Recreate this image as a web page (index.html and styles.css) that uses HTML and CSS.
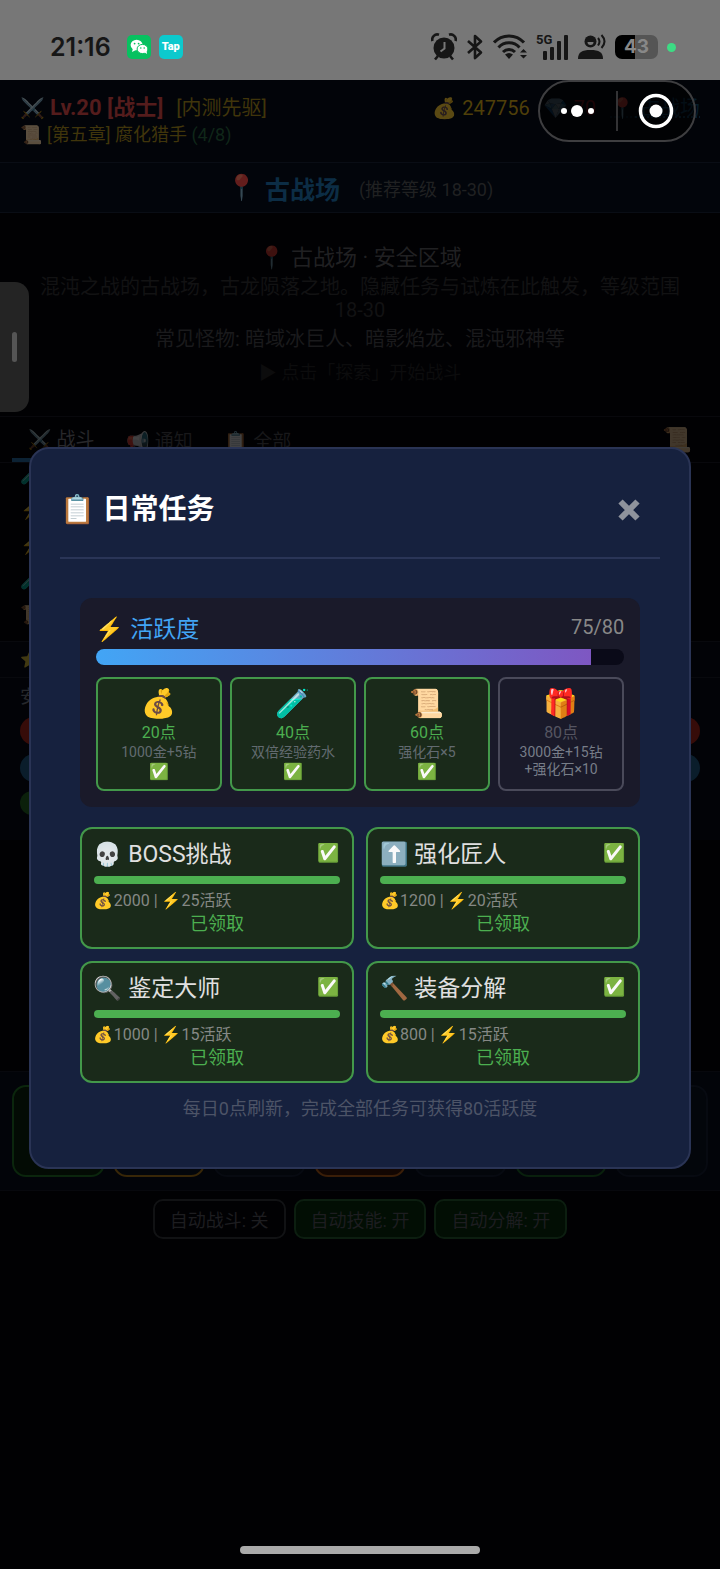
FILE: index.html
```
<!DOCTYPE html>
<html lang="zh-CN">
<head>
  <meta charset="UTF-8">
  <meta name="viewport" content="width=device-width, initial-scale=1.0">
  <title>日常任务</title>
  <link rel="stylesheet" href="styles.css">
</head>
<body>
  <div class="status-bar">
    <div class="status-left">
      <span class="clock">21:16</span>
      <svg class="app-icon" viewBox="0 0 24 24">
        <rect width="24" height="24" rx="5" fill="#07c160"/>
        <ellipse cx="9.600" cy="10" rx="6" ry="5.200" fill="#fff"/>
        <path d="M6 13l-1 4 4-2z" fill="#fff"/>
        <ellipse cx="15.500" cy="14" rx="5.400" ry="4.600" fill="#fff" stroke="#07c160"/>
        <path d="M17 17l3 2-.5-4z" fill="#fff"/>
        <g fill="#07c160"><circle cx="7.600" cy="8.600" r=".9"/><circle cx="11.600" cy="8.600" r=".9"/><circle cx="13.800" cy="13" r=".8"/><circle cx="17.200" cy="13" r=".8"/></g>
      </svg>
      <span class="tap-icon">Tap</span>
    </div>
    <div class="status-right">
      <svg width="26" height="28" viewBox="0 0 26 28" fill="#161616">
        <circle cx="13" cy="15" r="10.500"/>
        <path d="M1.500 8A5 5 0 0 1 8 1.800M18 1.800A5 5 0 0 1 24.500 8M7 23l-3 3.500M19 23l3 3.500" fill="none" stroke="#161616" stroke-width="2.600"/>
        <path d="M13.500 9v6.500l-4 3" fill="none" stroke="#777" stroke-width="2"/>
      </svg>
      <svg width="18" height="26" viewBox="0 0 18 26" fill="none" stroke="#161616" stroke-width="2.600" stroke-linejoin="round">
        <path d="M2 7l13 11.500L9 24V2l6 5.500L2 19"/>
      </svg>
      <svg width="34" height="26" viewBox="0 0 34 26" fill="none" stroke="#161616" stroke-width="3">
        <path d="M1 8.500C9-.3 23-.3 31 8.500M5.500 13.500C11 7.300 21 7.300 26.500 13.500M10 18c3.500-3.500 8.500-3.500 12 0"/>
        <path d="M12 20.500q4-3 8 0L16 25zM27 18.500h7L30.500 15zM27 21h7l-3.500 3.500z" fill="#161616" stroke="none"/>
      </svg>
      <span class="signal">
        <span class="net">5G</span>
        <svg width="26" height="25" viewBox="0 0 26 25" fill="#161616">
          <rect x="0" y="16" width="4" height="9" rx="1"/><rect x="7" y="12" width="4" height="13" rx="1"/><rect x="14" y="6" width="4" height="19" rx="1"/><rect x="21" y="0" width="4" height="25" rx="1"/>
        </svg>
      </span>
      <svg width="28" height="26" viewBox="0 0 28 26" fill="#161616">
        <path d="M0 25c0-7 4-9 12.500-9S25 18 25 25z"/>
        <circle cx="12.500" cy="7.500" r="6"/>
        <path d="M9.500 8h6a3 3 0 0 1-6 0z" fill="#777"/>
        <path d="M20 4q3 3.500 0 7.500M23.500 1q6 6.500 0 13" fill="none" stroke="#161616" stroke-width="2"/>
      </svg>
      <span class="battery">43</span>
      <span class="live-dot"></span>
    </div>
  </div>

  <div class="game">
    <header class="player">
      <div class="player-row">
        <div class="player-name"><span class="emoji">⚔️</span> <b>Lv.20 [战士]</b> <span class="badge">[内测先驱]</span></div>
        <div class="wallet">
          <span class="gold"><span class="emoji">💰</span> 247756</span>
          <span class="gem"><span class="emoji">💎</span> 70</span>
          <a class="place" href="#map"><span class="emoji">📍</span> 古战场</a>
        </div>
      </div>
      <div class="quest"><span class="emoji">📜</span> [第五章] 腐化猎手 <span class="count">(4/8)</span></div>
    </header>

    <div class="location">
      <span class="emoji">📍</span>
      <strong>古战场</strong>
      <span>(推荐等级 18-30)</span>
    </div>

    <section class="zone">
      <div class="zone-name"><span class="emoji">📍</span> 古战场 · 安全区域</div>
      <p class="zone-desc">混沌之战的古战场，古龙陨落之地。隐藏任务与试炼在此触发，等级范围 18-30</p>
      <p class="zone-monsters">常见怪物: 暗域冰巨人、暗影焰龙、混沌邪神等</p>
      <p class="zone-hint">▶ 点击「探索」开始战斗</p>
    </section>

    <nav class="tabs">
      <button class="tab active"><span class="emoji">⚔️</span> 战斗</button>
      <button class="tab"><span class="emoji">📢</span> 通知</button>
      <button class="tab"><span class="emoji">📋</span> 全部</button>
      <button class="tab log-btn" aria-label="日志"><span class="emoji">📜</span></button>
    </nav>

    <div class="log">
      <span class="emoji">🧪</span>
      <span class="emoji">⚡</span>
      <span class="emoji">⚡</span>
      <span class="emoji">🧪</span>
      <span class="emoji">📜</span>
    </div>
    <div class="buffs"><span class="emoji">⭐</span></div>
    <div class="stats">
      <div class="safe">安</div>
      <div class="bar hp"></div>
      <div class="bar mp"></div>
      <div class="bar exp"></div>
    </div>

    <div class="actions">
      <button class="action green" aria-label="探索"></button>
      <button class="action gold" aria-label="背包"></button>
      <button class="action" aria-label="技能"></button>
      <button class="action orange" aria-label="强化"></button>
      <button class="action" aria-label="地图"></button>
      <button class="action green-line" aria-label="任务"></button>
      <button class="action" aria-label="更多"></button>
    </div>

    <div class="toggles">
      <button class="toggle">自动战斗: 关</button>
      <button class="toggle on">自动技能: 开</button>
      <button class="toggle on">自动分解: 开</button>
    </div>
  </div>

  <div class="capsule">
    <button class="capsule-btn" aria-label="菜单">
      <svg width="36" height="16" viewBox="0 0 36 16" fill="#fff"><circle cx="4" cy="8" r="3"/><circle cx="17" cy="8" r="6"/><circle cx="31" cy="8" r="3"/></svg>
    </button>
    <span class="capsule-line"></span>
    <button class="capsule-btn" aria-label="关闭小程序">
      <svg width="36" height="36" viewBox="0 0 36 36"><circle cx="18" cy="18" r="15.500" fill="none" stroke="#fff" stroke-width="3.500"/><circle cx="18" cy="18" r="6.500" fill="#fff"/></svg>
    </button>
  </div>

  <div class="side-handle"><span></span></div>

  <div class="overlay">
    <div class="modal" role="dialog" aria-labelledby="modalTitle">
      <div class="modal-header">
        <h2 id="modalTitle">📋 日常任务</h2>
        <button class="close" aria-label="关闭">
          <svg width="22" height="22" viewBox="0 0 22 22"><path d="M2.500 2.500l17 17M19.500 2.500l-17 17" stroke="#8f939c" stroke-width="6"/></svg>
        </button>
      </div>

      <div class="modal-body">
        <section class="activity">
          <div class="activity-head">
            <span class="activity-title">⚡ 活跃度</span>
            <span class="activity-value">75/80</span>
          </div>
          <div class="activity-bar"><div class="activity-fill" style="width:93.75%"></div></div>
          <div class="rewards">
            <div class="reward done">
              <div class="reward-icon">💰</div>
              <div class="reward-point">20点</div>
              <div class="reward-text">1000金+5钻</div>
              <div class="reward-check">✅</div>
            </div>
            <div class="reward done">
              <div class="reward-icon">🧪</div>
              <div class="reward-point">40点</div>
              <div class="reward-text">双倍经验药水</div>
              <div class="reward-check">✅</div>
            </div>
            <div class="reward done">
              <div class="reward-icon">📜</div>
              <div class="reward-point">60点</div>
              <div class="reward-text">强化石×5</div>
              <div class="reward-check">✅</div>
            </div>
            <div class="reward">
              <div class="reward-icon">🎁</div>
              <div class="reward-point">80点</div>
              <div class="reward-text">3000金+15钻<br>+强化石×10</div>
            </div>
          </div>
        </section>

        <div class="tasks">
          <div class="task">
            <div class="task-head"><span>💀 BOSS挑战</span><span class="task-check">✅</span></div>
            <div class="task-bar"></div>
            <div class="task-meta">💰2000 | ⚡25活跃</div>
            <div class="task-state">已领取</div>
          </div>
          <div class="task">
            <div class="task-head"><span>⬆️ 强化匠人</span><span class="task-check">✅</span></div>
            <div class="task-bar"></div>
            <div class="task-meta">💰1200 | ⚡20活跃</div>
            <div class="task-state">已领取</div>
          </div>
          <div class="task">
            <div class="task-head"><span>🔍 鉴定大师</span><span class="task-check">✅</span></div>
            <div class="task-bar"></div>
            <div class="task-meta">💰1000 | ⚡15活跃</div>
            <div class="task-state">已领取</div>
          </div>
          <div class="task">
            <div class="task-head"><span>🔨 装备分解</span><span class="task-check">✅</span></div>
            <div class="task-bar"></div>
            <div class="task-meta">💰800 | ⚡15活跃</div>
            <div class="task-state">已领取</div>
          </div>
        </div>
        <p class="tip">每日0点刷新，完成全部任务可获得80活跃度</p>
      </div>
    </div>
  </div>

  <div class="home-indicator"></div>
</body>
</html>
```
FILE: styles.css
```
* {
  box-sizing: border-box;
}
body {
  margin: 0;
  min-height: 100vh;
  background: #010103;
  color: #ddd;
  font-family: Roboto, "Noto Sans CJK SC", "Noto Color Emoji", sans-serif;
}
p, h2 {
  margin: 0;
}
button {
  font: inherit;
  color: inherit;
  background: none;
  border: none;
  padding: 0;
}

/* 系统状态栏 */
.status-bar {
  display: flex;
  justify-content: space-between;
  align-items: center;
  height: 80px;
  padding: 14px 44px 0 50px;
  background: #777;
  color: #161616;
}
.status-left, .status-right {
  display: flex;
  align-items: center;
  gap: 8px;
}
.clock {
  font-family: Inter, Roboto, sans-serif;
  font-size: 25px;
  font-weight: 600;
  margin-right: 8px;
}
.app-icon {
  width: 24px;
  height: 24px;
}
.tap-icon {
  width: 24px;
  height: 24px;
  border-radius: 5px;
  background: #0cc9cd;
  color: #fff;
  font-size: 11px;
  font-weight: 900;
  line-height: 24px;
  text-align: center;
}
.status-right {
  gap: 9px;
}
.signal {
  display: flex;
  position: relative;
  padding-left: 7px;
}
.net {
  position: absolute;
  left: 0;
  top: -1px;
  font-size: 13px;
  line-height: 12px;
  font-weight: 700;
}
.battery {
  width: 43px;
  height: 24px;
  border-radius: 7px;
  background: linear-gradient(90deg, #000 46%, #555 46%);
  color: #888;
  font-family: Inter, sans-serif;
  font-size: 19px;
  font-weight: 700;
  line-height: 24px;
  text-align: center;
}
.live-dot {
  width: 9px;
  height: 9px;
  border-radius: 50%;
  background: #3ddc84;
}

/* 弹窗后面的游戏界面 */
.emoji {
  opacity: 0.25;
}
.player {
  height: 82px;
  padding: 14px 20px 0;
  background: #020409;
}
.player .emoji {
  opacity: 0.35;
}
.player-row {
  display: flex;
  justify-content: space-between;
  align-items: center;
  font-size: 20px;
  line-height: 28px;
}
.player-name b {
  font-size: 22px;
  margin-right: 8px;
  color: #541c1c;
}
.badge {
  color: #40350b;
}
.wallet {
  display: flex;
  gap: 14px;
}
.gold {
  color: #4f3f09;
}
.gem {
  color: #35090e;
}
.gem .emoji {
  opacity: 0.2;
}
.place {
  color: #071c2a;
  text-decoration: underline dotted;
}
.quest {
  font-size: 18px;
  line-height: 26px;
  color: #40350b;
}
.count {
  color: #102719;
}
.location {
  display: flex;
  justify-content: center;
  align-items: center;
  gap: 7px;
  height: 51px;
  border: solid #090d15;
  border-width: 1px 0;
  background: #02050b;
  font-size: 18px;
  color: #202122;
}
.location .emoji, .location strong {
  font-size: 25px;
}
.location .emoji {
  opacity: 0.4;
}
.location strong {
  color: #0c2d45;
  margin-right: 12px;
}
.zone {
  padding: 32px 36px;
  height: 203px;
  text-align: center;
  font-size: 20px;
  line-height: 23px;
}
.zone-name {
  font-size: 22px;
  line-height: 26px;
  margin-bottom: 5px;
  color: #202022;
}
.zone-desc {
  color: #121213;
  margin-bottom: 6px;
}
.zone-monsters {
  color: #1a1a1c;
  margin-bottom: 10px;
}
.zone-hint {
  font-size: 18px;
  color: #0c0c0d;
}
.tabs {
  display: flex;
  height: 47px;
  padding: 0 12px;
  border: solid #08080c;
  border-width: 1px 0;
  font-size: 19px;
  color: #18181a;
}
.tab {
  padding: 0 16px;
}
.tab.active {
  border-bottom: 4px solid #0c2234;
  color: #28282b;
}
.log-btn {
  margin-left: auto;
  font-size: 24px;
}
.log {
  display: flex;
  flex-direction: column;
  gap: 11px;
  height: 178px;
  padding-left: 20px;
  font-size: 18px;
  line-height: 24px;
}
.buffs {
  height: 37px;
  padding-left: 20px;
  border: solid #08090d;
  border-width: 1px 0;
  background: #020307;
  line-height: 36px;
}
.stats {
  display: flex;
  flex-direction: column;
  gap: 9px;
  height: 162px;
  padding: 8px 20px;
  background: #020307;
}
.safe {
  font-size: 18px;
  line-height: 22px;
  color: #26282c;
}
.bar {
  height: 28px;
  flex-shrink: 0;
  border-radius: 14px;
}
.hp {
  background: #360c09;
}
.mp {
  background: #0a1d2b;
}
.exp {
  width: 40%;
  height: 24px;
  background: #0b200b;
}
.actions {
  display: flex;
  gap: 8px;
  margin-top: 231px;
  padding: 13px 12px;
  height: 120px;
  border: solid #07080d;
  border-width: 1px 0;
  background: #020409;
}
.action {
  flex: 1;
  border: 2px solid #070a11;
  border-radius: 14px;
  background: #03060b;
}
.action.green {
  border-color: #0b260d;
  background: #030b04;
}
.action.gold {
  border-color: #382708;
}
.action.orange {
  border-color: #3a1e08;
  background: #120602;
}
.action.green-line {
  border-color: #09200d;
}
.toggles {
  display: flex;
  justify-content: center;
  gap: 8px;
  padding: 8px;
}
.toggle {
  height: 40px;
  padding: 0 15px;
  border: 2px solid #111214;
  border-radius: 10px;
  font-size: 18px;
  color: #1d1d20;
}
.toggle.on {
  border-color: #0c1e10;
  background: #020e04;
}

/* 小程序胶囊按钮 */
.capsule {
  position: absolute;
  top: 80px;
  right: 24px;
  display: flex;
  align-items: center;
  width: 158px;
  height: 62px;
  border: 2px solid #3e3e40;
  border-radius: 31px;
  background: rgba(0, 0, 0, 0.5);
}
.capsule-btn {
  display: flex;
  flex: 1;
  justify-content: center;
}
.capsule-line {
  width: 2px;
  height: 40px;
  background: #333335;
}
.side-handle {
  position: absolute;
  top: 282px;
  left: 0;
  display: flex;
  justify-content: center;
  align-items: center;
  width: 29px;
  height: 130px;
  border-radius: 0 14px 14px 0;
  background: #242424;
}
.side-handle span {
  width: 5px;
  height: 30px;
  border-radius: 3px;
  background: #555;
}

/* 日常任务弹窗 */
.overlay {
  position: absolute;
  top: 447px;
  left: 0;
  right: 0;
  display: flex;
  justify-content: center;
}
.modal {
  width: 92%;
  padding: 0 29px 45px;
  border: 2px solid #2a3455;
  border-radius: 20px;
  background: #16213e;
}
.modal-header {
  display: flex;
  justify-content: space-between;
  align-items: center;
  height: 110px;
  padding: 14px 20px 0 1px;
  border-bottom: 2px solid #2a3557;
}
.modal-header h2 {
  font-size: 28px;
  line-height: 36px;
  font-weight: 700;
  color: #fff;
}
.close {
  display: flex;
  cursor: pointer;
}
.modal-body {
  padding: 39px 20px 0;
}
.activity {
  padding: 15px 16px 16px;
  border-radius: 12px;
  background: #1a1a2a;
}
.activity-head {
  display: flex;
  justify-content: space-between;
  align-items: center;
  height: 28px;
  margin-bottom: 8px;
}
.activity-title {
  font-size: 23px;
  color: #42a5f5;
}
.activity-value {
  font-size: 20px;
  color: #888;
}
.activity-bar {
  height: 16px;
  margin-bottom: 12px;
  border-radius: 8px;
  background: #0a0a18;
  overflow: hidden;
}
.activity-fill {
  height: 100%;
  background: linear-gradient(90deg, #42a5f5, #7e57c2);
}
.rewards {
  display: grid;
  grid-template-columns: repeat(4, 1fr);
  gap: 8px;
}
.reward {
  height: 114px;
  padding-top: 8px;
  border: 2px solid #4a4a5a;
  border-radius: 8px;
  text-align: center;
  color: #777d88;
}
.reward.done {
  border-color: #43984a;
  background: #1a2a1a;
  color: #626a70;
}
.reward-icon {
  font-size: 28px;
  line-height: 34px;
}
.reward-point {
  font-size: 16px;
  line-height: 23px;
  color: #555561;
}
.reward.done .reward-point {
  color: #4caf50;
}
.reward-text {
  font-size: 14px;
  line-height: 17px;
}
.reward-check {
  font-size: 16px;
  line-height: 22px;
}
.tasks {
  display: grid;
  grid-template-columns: 1fr 1fr;
  gap: 12px;
  margin: 20px 0 13px;
}
.task {
  height: 122px;
  padding: 9px 12px;
  border: 2px solid #43984a;
  border-radius: 12px;
  background: #1a2a1a;
}
.task-head {
  display: flex;
  justify-content: space-between;
  align-items: center;
  height: 28px;
  font-size: 23px;
  color: #e0e0e0;
}
.task-check {
  font-size: 18px;
}
.task-bar {
  height: 8px;
  margin: 10px 0 5px;
  border-radius: 4px;
  background: #4caf50;
}
.task-meta {
  font-size: 16px;
  line-height: 23px;
  color: #858885;
}
.task-state {
  font-size: 18px;
  line-height: 24px;
  text-align: center;
  color: #4caf50;
}
.tip {
  font-size: 18px;
  line-height: 26px;
  text-align: center;
  color: #4d5467;
}

.home-indicator {
  position: fixed;
  bottom: 15px;
  left: 50%;
  width: 240px;
  height: 8px;
  margin-left: -120px;
  border-radius: 4px;
  background: #aaa;
}
```
